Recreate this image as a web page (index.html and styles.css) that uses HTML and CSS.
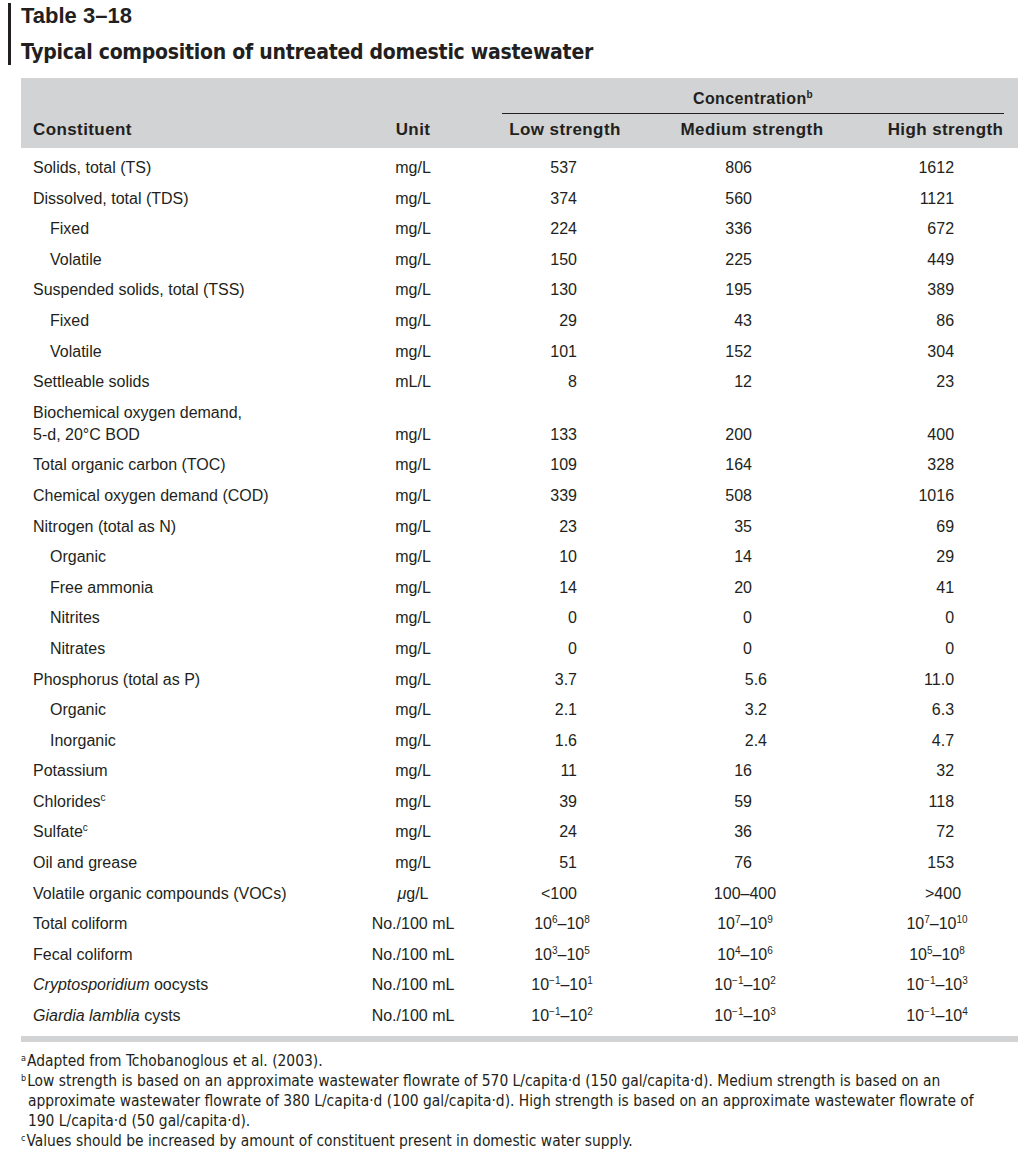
FILE: index.html
```html
<!DOCTYPE html>
<html lang="en">
<head>
<meta charset="utf-8">
<title>Table 3–18</title>
<link rel="stylesheet" href="styles.css">
</head>
<body>
<div class="caption">
  <div class="label">Table 3–18</div>
  <div class="title">Typical composition of untreated domestic wastewater</div>
</div>
<table class="data">
  <colgroup>
    <col class="c-name"><col class="c-unit"><col class="c-low"><col class="c-med"><col class="c-high">
  </colgroup>
  <thead>
    <tr>
      <th class="h-name" rowspan="2">Constituent</th>
      <th class="h-unit" rowspan="2">Unit</th>
      <th class="h-conc" colspan="3"><div class="conc">Concentration<sup class="fn">b</sup></div></th>
    </tr>
    <tr>
      <th class="h-low">Low strength</th>
      <th class="h-med">Medium strength</th>
      <th class="h-high">High strength</th>
    </tr>
  </thead>
  <tbody>
    <tr class="first"><td>Solids, total (TS)</td><td>mg/L</td><td>537</td><td>806</td><td>1612</td></tr>
    <tr><td>Dissolved, total (TDS)</td><td>mg/L</td><td>374</td><td>560</td><td>1121</td></tr>
    <tr><td class="sub">Fixed</td><td>mg/L</td><td>224</td><td>336</td><td>672</td></tr>
    <tr><td class="sub">Volatile</td><td>mg/L</td><td>150</td><td>225</td><td>449</td></tr>
    <tr><td>Suspended solids, total (TSS)</td><td>mg/L</td><td>130</td><td>195</td><td>389</td></tr>
    <tr><td class="sub">Fixed</td><td>mg/L</td><td>29</td><td>43</td><td>86</td></tr>
    <tr><td class="sub">Volatile</td><td>mg/L</td><td>101</td><td>152</td><td>304</td></tr>
    <tr><td>Settleable solids</td><td>mL/L</td><td>8</td><td>12</td><td>23</td></tr>
    <tr class="two"><td>Biochemical oxygen demand,<br>5-d, 20°C BOD</td><td>mg/L</td><td>133</td><td>200</td><td>400</td></tr>
    <tr><td>Total organic carbon (TOC)</td><td>mg/L</td><td>109</td><td>164</td><td>328</td></tr>
    <tr><td>Chemical oxygen demand (COD)</td><td>mg/L</td><td>339</td><td>508</td><td>1016</td></tr>
    <tr><td>Nitrogen (total as N)</td><td>mg/L</td><td>23</td><td>35</td><td>69</td></tr>
    <tr><td class="sub">Organic</td><td>mg/L</td><td>10</td><td>14</td><td>29</td></tr>
    <tr><td class="sub">Free ammonia</td><td>mg/L</td><td>14</td><td>20</td><td>41</td></tr>
    <tr><td class="sub">Nitrites</td><td>mg/L</td><td>0</td><td>0</td><td>0</td></tr>
    <tr><td class="sub">Nitrates</td><td>mg/L</td><td>0</td><td>0</td><td>0</td></tr>
    <tr class="dec"><td>Phosphorus (total as P)</td><td>mg/L</td><td>3.7</td><td>5.6</td><td>11.0</td></tr>
    <tr class="dec"><td class="sub">Organic</td><td>mg/L</td><td>2.1</td><td>3.2</td><td>6.3</td></tr>
    <tr class="dec"><td class="sub">Inorganic</td><td>mg/L</td><td>1.6</td><td>2.4</td><td>4.7</td></tr>
    <tr><td>Potassium</td><td>mg/L</td><td>11</td><td>16</td><td>32</td></tr>
    <tr><td>Chlorides<sup class="fn">c</sup></td><td>mg/L</td><td>39</td><td>59</td><td>118</td></tr>
    <tr><td>Sulfate<sup class="fn">c</sup></td><td>mg/L</td><td>24</td><td>36</td><td>72</td></tr>
    <tr><td>Oil and grease</td><td>mg/L</td><td>51</td><td>76</td><td>153</td></tr>
    <tr class="voc"><td>Volatile organic compounds (VOCs)</td><td><i>μ</i>g/L</td><td>&lt;100</td><td>100–400</td><td>&gt;400</td></tr>
    <tr class="rng"><td>Total coliform</td><td>No./100 mL</td><td>10<sup>6</sup>–10<sup>8</sup></td><td>10<sup>7</sup>–10<sup>9</sup></td><td>10<sup>7</sup>–10<sup>10</sup></td></tr>
    <tr class="rng"><td>Fecal coliform</td><td>No./100 mL</td><td>10<sup>3</sup>–10<sup>5</sup></td><td>10<sup>4</sup>–10<sup>6</sup></td><td>10<sup>5</sup>–10<sup>8</sup></td></tr>
    <tr class="rng"><td><i>Cryptosporidium</i> oocysts</td><td>No./100 mL</td><td>10<sup>−1</sup>–10<sup>1</sup></td><td>10<sup>−1</sup>–10<sup>2</sup></td><td>10<sup>−1</sup>–10<sup>3</sup></td></tr>
    <tr class="rng last"><td><i>Giardia lamblia</i> cysts</td><td>No./100 mL</td><td>10<sup>−1</sup>–10<sup>2</sup></td><td>10<sup>−1</sup>–10<sup>3</sup></td><td>10<sup>−1</sup>–10<sup>4</sup></td></tr>
  </tbody>
</table>
<div class="notes">
  <p><sup class="mk">a</sup>Adapted from Tchobanoglous et al. (2003).</p>
  <p><sup class="mk">b</sup>Low strength is based on an approximate wastewater flowrate of 570 L/capita·d (150 gal/capita·d). Medium strength is based on an approximate wastewater flowrate of 380 L/capita·d (100 gal/capita·d). High strength is based on an approximate wastewater flowrate of 190 L/capita·d (50 gal/capita·d).</p>
  <p><sup class="mk">c</sup>Values should be increased by amount of constituent present in domestic water supply.</p>
</div>
</body>
</html>
```
FILE: styles.css
```css
html, body {
  margin: 0;
  padding: 0;
  background: #ffffff;
}
body {
  color: #231f20;
  font-family: "Liberation Sans", Arial, sans-serif;
  font-size: 16px;
  width: 1018px;
  overflow: hidden;
}
.caption {
  margin: 3px 0 0 8px;
  border-left: 3px solid #231f20;
  padding-left: 10px;
  height: 62px;
}
.label {
  font-weight: bold;
  font-size: 22px;
  line-height: 26px;
}
.title {
  font-family: "DejaVu Sans Condensed", "Liberation Sans", sans-serif;
  font-weight: bold;
  font-size: 21px;
  letter-spacing: -0.25px;
  line-height: 30px;
  margin-top: 8px;
}
.data {
  margin: 13px 0 0 21px;
  width: 997px;
  table-layout: fixed;
  border-collapse: separate;
  border-spacing: 0;
}
.c-name { width: 349px; }
.c-unit { width: 86px; }
.c-low { width: 194px; }
.c-med { width: 190px; }
.c-high { width: 178px; }

.data th {
  background: #d1d3d4;
  font-weight: bold;
  font-size: 17px;
  letter-spacing: 0.4px;
  padding: 0;
}
.h-name {
  text-align: left;
  vertical-align: bottom;
  padding: 0 0 8px 12px !important;
  line-height: 20px;
}
.h-unit {
  text-align: center;
  vertical-align: bottom;
  padding-bottom: 8px !important;
  line-height: 20px;
}
.h-conc {
  padding: 12px 0 0 0 !important;
  line-height: 18px;
}
.conc {
  margin: 0 14px 0 46px;
  padding-bottom: 5px;
  border-bottom: 1px solid #231f20;
  text-align: center;
  font-size: 16px;
}
.h-low, .h-med, .h-high {
  text-align: center;
  line-height: 20px;
  padding-top: 6px !important;
  padding-bottom: 8px !important;
}
.h-low { padding-left: 24px !important; }
.h-med { padding-left: 14px !important; }
.h-high { padding-left: 33px !important; }

.data td {
  line-height: 22px;
  padding: 4.3px 0;
  vertical-align: bottom;
  white-space: nowrap;
}
.data td:nth-child(1) { padding-left: 12px; text-align: left; }
.data td.sub { padding-left: 29px; }
.data td:nth-child(2) { text-align: center; }
.data td:nth-child(3) { text-align: right; padding-right: 73px; }
.data td:nth-child(4) { text-align: right; padding-right: 88px; }
.data td:nth-child(5) { text-align: right; padding-right: 64px; }

.data tr.first td { padding-top: 9px; }
.data tr.dec td:nth-child(4) { padding-right: 73px; }

.data tr.rng td:nth-child(3) { text-align: center; padding-right: 0; padding-left: 18px; }
.data tr.rng td:nth-child(4),
.data tr.voc td:nth-child(4) { text-align: center; padding-right: 0; }
.data tr.rng td:nth-child(5) { text-align: center; padding-right: 0; padding-left: 16px; }
.data tr.voc td:nth-child(5) { padding-right: 57px; }

.data tr.last td {
  padding-bottom: 9px;
  border-bottom: 6px solid #d1d3d4;
}

.data td sup {
  font-size: 10px;
  line-height: 0;
  vertical-align: 6px;
}
sup.fn {
  font-size: 10px;
  line-height: 0;
  vertical-align: 6px;
  font-weight: bold;
}
td sup.fn { font-weight: normal; }

.notes {
  margin: 9px 0 0 21px;
  font-family: "DejaVu Sans Condensed", "Liberation Sans", sans-serif;
  font-size: 15.4px;
  line-height: 20px;
}
.notes p {
  margin: 0;
  padding-left: 7px;
  text-indent: -7px;
  padding-right: 20px;
}
.mk {
  font-size: 9px;
  line-height: 0;
  vertical-align: 5px;
  margin-right: 1px;
}
```
